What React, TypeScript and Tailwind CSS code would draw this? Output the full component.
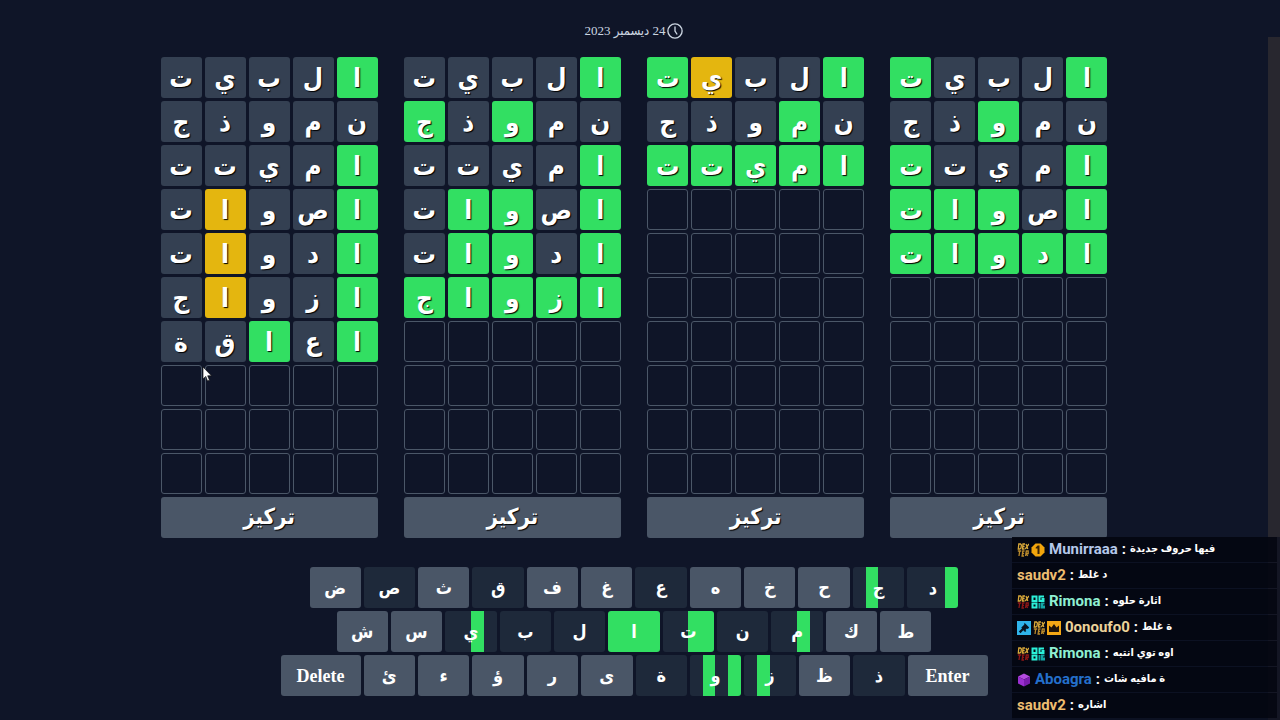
import React from "react";

type Board = { rows: [string, string][] };

const boards: Board[] = [
  { rows: [["البيت", "g----"], ["نموذج", "-----"], ["اميتت", "g----"], ["اصوات", "g--y-"], ["ادوات", "g--y-"], ["ازواج", "g--y-"], ["اعاقة", "g-g--"]] },
  { rows: [["البيت", "g----"], ["نموذج", "--g-g"], ["اميتت", "g----"], ["اصوات", "g-gg-"], ["ادوات", "g-gg-"], ["ازواج", "ggggg"]] },
  { rows: [["البيت", "g--yg"], ["نموذج", "-g---"], ["اميتت", "ggggg"]] },
  { rows: [["البيت", "g---g"], ["نموذج", "--g--"], ["اميتت", "g---g"], ["اصوات", "g-ggg"], ["ادوات", "ggggg"]] },
];

const tones: Record<string, string> = {
  g: "bg-[#32df62]",
  y: "bg-[#e4b60f]",
  "-": "bg-[#344052]",
};

const ROWS = [0, 1, 2, 3, 4, 5, 6, 7, 8, 9];
const COLS = [0, 1, 2, 3, 4];

function BoardView({ board }: { board: Board }) {
  return (
    <section className="flex flex-col gap-[3px]">
      {ROWS.map((r) => (
        <div key={r} dir="rtl" className="grid grid-cols-5 gap-[3px]">
          {COLS.map((c) => {
            const row = board.rows[r];
            return row ? (
              <div key={c} className={`flex size-[41px] items-center justify-center rounded-[3px] pt-0.5 ${tones[row[1][c]]}`}>
                <span className="text-[26px] leading-8 font-bold text-white [text-shadow:1px_1px_1px_#000]">{row[0][c]}</span>
              </div>
            ) : (
              <div key={c} className="size-[41px] rounded-[3px] border border-[#4b5768]" />
            );
          })}
        </div>
      ))}
      <button className="h-[41px] rounded-[3px] bg-[#4a5667] pb-0.5 text-[22px] font-bold text-white [text-shadow:1px_1px_1px_#000]">تركيز</button>
    </section>
  );
}

const open = "bg-[#4a5667]";
const used = "bg-[#1e293a]";

type Key = [string, string];
const topRow: Key[] = [["ض", open], ["ص", used], ["ث", open], ["ق", used], ["ف", open], ["غ", open], ["ع", used], ["ه", open], ["خ", open], ["ح", open],
  ["ج", "bg-[linear-gradient(90deg,#1e293a_25%,#32df62_25%_50%,#1e293a_50%)]"], ["د", "bg-[linear-gradient(90deg,#1e293a_75%,#32df62_75%)]"]];
const midRow: Key[] = [["ش", open], ["س", open], ["ي", "bg-[linear-gradient(90deg,#1e293a_50%,#32df62_50%_75%,#1e293a_75%)]"], ["ب", used], ["ل", used],
  ["ا", "bg-[#32df62]"], ["ت", "bg-[linear-gradient(90deg,#1e293a_50%,#32df62_50%)]"], ["ن", used],
  ["م", "bg-[linear-gradient(90deg,#1e293a_50%,#32df62_50%_75%,#1e293a_75%)]"], ["ك", open], ["ط", open]];
const lowRow: Key[] = [["Delete", open], ["ئ", open], ["ء", open], ["ؤ", open], ["ر", open], ["ى", open], ["ة", used],
  ["و", "bg-[linear-gradient(90deg,#1e293a_25%,#32df62_25%_50%,#1e293a_50%_75%,#32df62_75%)]"],
  ["ز", "bg-[linear-gradient(90deg,#1e293a_25%,#32df62_25%_50%,#1e293a_50%)]"], ["ظ", open], ["ذ", used], ["Enter", open]];

function Keys({ keys, className }: { keys: Key[]; className: string }) {
  return (
    <div className={`grid gap-[3px] ${className}`}>
      {keys.map(([label, tone]) => (
        <button key={label} className={`h-[41px] rounded-[3px] text-lg font-bold text-white ${tone}`}>{label}</button>
      ))}
    </div>
  );
}

function Dexter({ top = "#d9a93a", low }: { top?: string; low: string }) {
  return (
    <svg viewBox="0 0 12 14" className="h-3.5 w-3" fill="none" strokeWidth="1.3">
      <path stroke={top} d="M1.800 1L1.300 6h1.500l1.200-1 .4-3-.9-1zM8 1H6l-.5 5h2M5.800 3.500h1.800M9 1l1.800 5M12 1L8.300 6" />
      <path stroke={low} d="M.8 8h3.500M2.700 8L2 13M7.500 8H5.800l-.7 5h2M5.500 10.500h1.600M8.600 13l.7-5h1.900v2.500H9.200l1.500 2.500" />
    </svg>
  );
}

function Coin() {
  return (
    <svg viewBox="0 0 14 14" className="size-3.5">
      <path fill="#f2a50c" d="M4.500 .5h5L13.500 4.500v5L9.500 13.500h-5L.5 9.500v-5z" />
      <path fill="#3b2405" d="M4.700 4.500l2-2h1.800V11H6.500V5.500H4.700z" />
    </svg>
  );
}

function Og() {
  return (
    <svg viewBox="0 0 14 14" className="size-3.5" fill="none" strokeWidth="2">
      <path stroke="#2bf0d8" d="M1.500 1.500h4V6h-4zM13 1.500H8.500V6h4V4h-2M1.500 8.500h4v4h-4z" />
      <path stroke="#13a7a5" d="M8.500 8v5.500M13.500 8.500H11v4h2v-2" />
    </svg>
  );
}

function Hammer() {
  return (
    <svg viewBox="0 0 14 14" className="size-3.5">
      <path fill="#2fb4ea" d="M0 0h14v14H0z" />
      <path fill="#071522" d="M7.500 1.800l4.700 4.700-1.400 1.500-1-.4-1.300 1.300.8 1-1.300 1.200-1.700-1.800L3.500 12.300 1.800 10.600 5 7.600 4.300 6.500 7.200 3.700z" />
    </svg>
  );
}

function Crown() {
  return (
    <svg viewBox="0 0 14 14" className="size-3.5">
      <path fill="#f5a815" d="M0 0h14v14H0z" />
      <path fill="#22160a" d="M2 4.500l2.500 2L7 3l2.500 3.500 2.500-2V11H2z" />
    </svg>
  );
}

function Cube() {
  return (
    <svg viewBox="0 0 14 14" className="size-3.5">
      <path fill="#b44be0" d="M7 .5l6 3L7 6.500 1 3.500z" />
      <path fill="#9a2fd0" d="M1 3.500l6 3V13.500L1 10.500z" />
      <path fill="#7a1cae" d="M13 3.500l-6 3V13.500l6-3z" />
    </svg>
  );
}

const chat: { badges: React.ReactNode[]; name: string; color: string; text: string }[] = [
  { badges: [<Dexter key="d" low="#b98a2c" />, <Coin key="c" />], name: "Munirraaa", color: "text-[#b4c8ea]", text: "فيها حروف جديدة" },
  { badges: [], name: "saudv2", color: "text-[#edbd70]", text: "د غلط" },
  { badges: [<Dexter key="d" low="#8d1717" />, <Og key="o" />], name: "Rimona", color: "text-[#8ff0d2]", text: "اثارة حلوه" },
  { badges: [<Hammer key="h" />, <Dexter key="d" low="#b98a2c" />, <Crown key="c" />], name: "0onoufo0", color: "text-[#edd39a]", text: "ة غلط" },
  { badges: [<Dexter key="d" low="#8d1717" />, <Og key="o" />], name: "Rimona", color: "text-[#8ff0d2]", text: "اوه توي انتبه" },
  { badges: [<Cube key="c" />], name: "Aboagra", color: "text-[#2470cc]", text: "ة مافيه شات" },
  { badges: [], name: "saudv2", color: "text-[#edbd70]", text: "اشاره" },
];

export default function App() {
  return (
    <div className="relative flex h-screen overflow-hidden bg-[#0f1528] font-['Liberation_Serif','DejaVu_Sans_Condensed','DejaVu_Sans',serif]">
      <main className="flex flex-1 flex-col items-center">
        <header className="flex h-[57px] items-center pt-1 text-[13px] text-[#cbd5e1]">
          <time dir="rtl">24 ديسمبر 2023</time>
          <svg viewBox="0 0 24 24" className="size-[18px]" fill="none" stroke="currentColor" strokeWidth="1.800" strokeLinecap="round">
            <circle cx="12" cy="12" r="9.500" />
            <path d="M12 6.500V12l2.500 4" />
          </svg>
        </header>
        <div className="flex w-full max-w-[947px] justify-between">
          {boards.map((b, i) => <BoardView key={i} board={b} />)}
        </div>
        <div className="mt-[29px] flex flex-col items-center gap-[3px]">
          <Keys keys={topRow} className="w-[649px] grid-cols-12" />
          <Keys keys={midRow} className="w-[595px] grid-cols-11" />
          <Keys keys={lowRow} className="w-[707px] grid-cols-[80px_repeat(10,1fr)_80px]" />
        </div>
      </main>
      <div className="mt-[37px] w-3 bg-[#28272f]" />
      <aside className="absolute right-0 bottom-0 w-[268px] bg-[#0b1020]/70 pr-[3px] pb-px font-['Roboto','DejaVu_Sans_Condensed','DejaVu_Sans',sans-serif]">
        <ul>
          {chat.map((m, i) => (
            <li key={i} className="mb-px flex h-[25px] items-center bg-[#02040d]/75 pl-[5px] text-[15px] font-bold text-white">
              {m.badges.length > 0 && <span className="mr-1 flex items-center gap-0.5">{m.badges}</span>}
              <span className={m.color}>{m.name}</span>
              <span className="px-1">:</span>
              <bdi className="text-[11px]">{m.text}</bdi>
            </li>
          ))}
        </ul>
      </aside>
      <svg viewBox="0 0 10 16" className="absolute top-[366px] left-[202px] h-4 w-2.5">
        <path fill="#fff" stroke="#111" strokeWidth=".7" d="M1 1v12l2.800-2.600L5.500 15l2-.8-1.800-4.400h3.800z" />
      </svg>
    </div>
  );
}
